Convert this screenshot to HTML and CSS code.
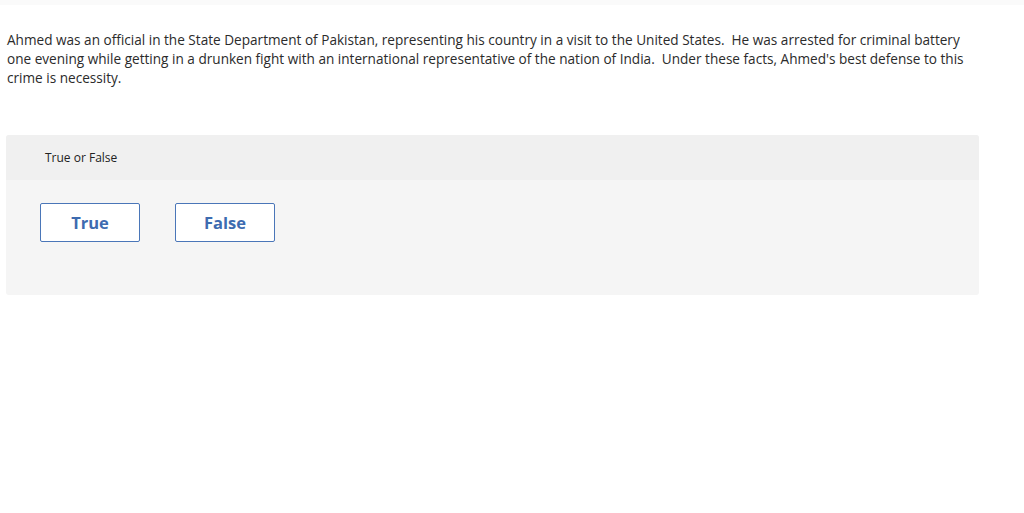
FILE: index.html
```html
<!DOCTYPE html>
<html>
<head>
<meta charset="utf-8">
<link rel="stylesheet" href="styles.css">
</head>
<body>
<div class="topbar"></div>
<div class="content">
  <p class="prompt">Ahmed was an official in the State Department of Pakistan, representing his country in a visit to the United States.&nbsp; He was arrested for criminal battery one evening while getting in a drunken fight with an international representative of the nation of India.&nbsp; Under these facts, Ahmed's best defense to this crime is necessity.</p>
  <div class="panel">
    <div class="panel-head">True or False</div>
    <div class="panel-body">
      <button class="choice">True</button>
      <button class="choice">False</button>
    </div>
  </div>
</div>
</body>
</html>
```
FILE: styles.css
```css
html, body {
  margin: 0;
  padding: 0;
  background: #fff;
}
body {
  font-family: "Open Sans", "Liberation Sans", sans-serif;
  color: #2b2b2b;
}
.topbar {
  height: 5px;
  background: #fafafa;
}
.content {
  padding: 25px 45px 0 6px;
}
.prompt {
  margin: 0 0 0 1px;
  font-size: 13.6px;
  line-height: 19px;
  width: 966px;
}
.panel {
  margin-top: 48px;
  width: 973px;
  border-radius: 3px;
  overflow: hidden;
  background: #f5f5f5;
}
.panel-head {
  height: 45px;
  background: #f0f0f0;
  padding-left: 39px;
  font-size: 12px;
  line-height: 45px;
  color: #222;
}
.panel-body {
  display: flex;
  gap: 35px;
  padding: 23px 0 53px 34px;
}
.choice {
  width: 100px;
  height: 39px;
  background: #fff;
  border: 1px solid #4a76b8;
  border-radius: 2px;
  color: #3d6bb0;
  font-family: "Open Sans", "Liberation Sans", sans-serif;
  font-weight: 700;
  font-size: 16.5px;
  padding: 0;
  margin: 0;
}
```
